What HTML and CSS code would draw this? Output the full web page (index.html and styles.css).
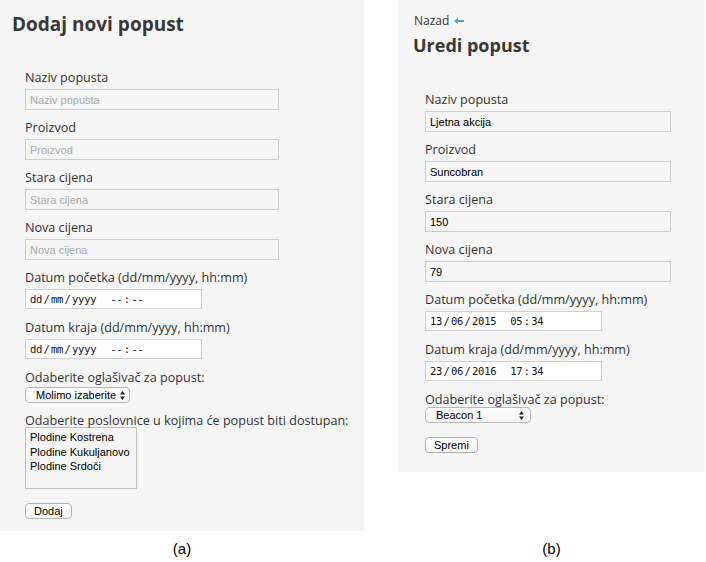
FILE: index.html
```html
<!DOCTYPE html>
<html lang="hr">
<head>
<meta charset="utf-8">
<title>Popusti</title>
<link rel="stylesheet" href="styles.css">
</head>
<body>
<div class="sheet">
  <section class="panel panel-a">
    <h1 class="title title-a">Dodaj novi popust</h1>
    <form class="form form-a">
      <div class="field">
        <label class="label">Naziv popusta</label>
        <input class="text" type="text" placeholder="Naziv popusta">
      </div>
      <div class="field">
        <label class="label">Proizvod</label>
        <input class="text" type="text" placeholder="Proizvod">
      </div>
      <div class="field">
        <label class="label">Stara cijena</label>
        <input class="text" type="text" placeholder="Stara cijena">
      </div>
      <div class="field">
        <label class="label">Nova cijena</label>
        <input class="text" type="text" placeholder="Nova cijena">
      </div>
      <div class="field field-date">
        <label class="label">Datum početka (dd/mm/yyyy, hh:mm)</label>
        <div class="datebox"><span class="seg">dd</span><span class="sep">/</span><span class="seg">mm</span><span class="sep">/</span><span class="seg">yyyy</span><span class="gap"></span><span class="seg">--</span><span class="sep">:</span><span class="seg">--</span></div>
      </div>
      <div class="field field-date">
        <label class="label">Datum kraja (dd/mm/yyyy, hh:mm)</label>
        <div class="datebox"><span class="seg">dd</span><span class="sep">/</span><span class="seg">mm</span><span class="sep">/</span><span class="seg">yyyy</span><span class="gap"></span><span class="seg">--</span><span class="sep">:</span><span class="seg">--</span></div>
      </div>
      <div class="field">
        <label class="label">Odaberite oglašivač za popust:</label>
        <div class="select select-a"><span>Molimo izaberite</span><svg class="updown" width="5" height="9" viewBox="0 0 5 9"><polygon points="0,3.6 2.5,0 5,3.6"/><polygon points="0,5.4 2.5,9 5,5.4"/></svg></div>
      </div>
      <div class="field">
        <label class="label">Odaberite poslovnice u kojima će popust biti dostupan:</label>
        <div class="listbox">
          <div class="option">Plodine Kostrena</div>
          <div class="option">Plodine Kukuljanovo</div>
          <div class="option">Plodine Srdoči</div>
        </div>
      </div>
      <div class="field field-btn">
        <button class="btn" type="button">Dodaj</button>
      </div>
    </form>
  </section>

  <section class="panel panel-b">
    <div class="back">Nazad <svg class="arrow" width="10" height="6" viewBox="0 0 10 6"><polygon points="0,3 4,0 4,2 10,2 10,4 4,4 4,6"/></svg></div>
    <h1 class="title title-b">Uredi popust</h1>
    <form class="form form-b">
      <div class="field">
        <label class="label">Naziv popusta</label>
        <input class="text" type="text" value="Ljetna akcija">
      </div>
      <div class="field">
        <label class="label">Proizvod</label>
        <input class="text" type="text" value="Suncobran">
      </div>
      <div class="field">
        <label class="label">Stara cijena</label>
        <input class="text" type="text" value="150">
      </div>
      <div class="field">
        <label class="label">Nova cijena</label>
        <input class="text" type="text" value="79">
      </div>
      <div class="field field-date">
        <label class="label">Datum početka (dd/mm/yyyy, hh:mm)</label>
        <div class="datebox"><span class="seg">13</span><span class="sep">/</span><span class="seg">06</span><span class="sep">/</span><span class="seg">2015</span><span class="gap"></span><span class="seg">05</span><span class="sep">:</span><span class="seg">34</span></div>
      </div>
      <div class="field field-date">
        <label class="label">Datum kraja (dd/mm/yyyy, hh:mm)</label>
        <div class="datebox"><span class="seg">23</span><span class="sep">/</span><span class="seg">06</span><span class="sep">/</span><span class="seg">2016</span><span class="gap"></span><span class="seg">17</span><span class="sep">:</span><span class="seg">34</span></div>
      </div>
      <div class="field">
        <label class="label">Odaberite oglašivač za popust:</label>
        <div class="select select-b"><span>Beacon 1</span><svg class="updown" width="5" height="9" viewBox="0 0 5 9"><polygon points="0,3.6 2.5,0 5,3.6"/><polygon points="0,5.4 2.5,9 5,5.4"/></svg></div>
      </div>
      <div class="field field-btn">
        <button class="btn" type="button">Spremi</button>
      </div>
    </form>
  </section>

  <div class="caption">(a)</div>
  <div class="caption">(b)</div>
</div>
</body>
</html>
```

FILE: styles.css
```css
html, body {
  margin: 0;
  padding: 0;
  background: #ffffff;
}

body {
  font-family: "Open Sans", "DejaVu Sans", sans-serif;
  color: #333333;
}

.sheet {
  display: grid;
  grid-template-columns: 364px 307px;
  column-gap: 34px;
  row-gap: 9px;
  align-items: start;
  width: 706px;
}

.panel {
  background: #f5f5f5;
  box-sizing: border-box;
}

.panel-a {
  height: 531px;
  padding: 12px 0 0 12px;
}

.panel-b {
  height: 472px;
  padding: 14px 0 0 15px;
}

.title {
  margin: 0;
  font-size: 18px;
  line-height: 24px;
  font-weight: 700;
  color: #383838;
}

.title-a {
  font-size: 19px;
}

.title-b {
  margin-top: 5px;
}

.back {
  display: flex;
  align-items: center;
  gap: 5px;
  padding-left: 1px;
  font-size: 12px;
  line-height: 14px;
  color: #333333;
}

.arrow {
  fill: #4d9de0;
  display: block;
}

.form {
  margin: 0;
}

.form-a {
  margin: 35px 0 0 13px;
}

.form-b {
  margin: 36px 0 0 12px;
}

.field + .field {
  margin-top: 11px;
}

.field-date + .field {
  margin-top: 12px;
}

.field + .field-btn {
  margin-top: 14px;
}

.label {
  display: block;
  font-size: 12.6px;
  line-height: 14px;
  color: #333333;
}

.text {
  display: block;
  box-sizing: border-box;
  width: 254px;
  height: 21px;
  margin: 4px 0 0;
  padding: 0 4px;
  border: 1px solid #cccccc;
  border-radius: 0;
  background: #f5f5f5;
  font: 11px "Liberation Sans", Arial, sans-serif;
  color: #000000;
  outline: none;
}

.text::placeholder {
  color: #a9a9a9;
}

.form-b .text {
  width: 246px;
}

.datebox {
  box-sizing: border-box;
  width: 177px;
  height: 20px;
  margin-top: 4px;
  padding: 0 4px;
  border: 1px solid #cfcfcf;
  background: #ffffff;
  font: 10.5px/18px "DejaVu Sans Mono", "Liberation Mono", monospace;
  letter-spacing: -0.3px;
  color: #111111;
  white-space: nowrap;
  opacity: 0.999;
}

.datebox .sep {
  display: inline-block;
  width: 9px;
  text-align: center;
}

.datebox .gap {
  display: inline-block;
  width: 14px;
}

.select {
  box-sizing: border-box;
  display: flex;
  align-items: center;
  justify-content: space-between;
  height: 16px;
  padding: 0 4px 0 10px;
  border: 1px solid #b8b8b8;
  border-radius: 4px;
  background: linear-gradient(#ffffff, #f3f3f3);
  font: 11px/14px "Liberation Sans", Arial, sans-serif;
  color: #000000;
}

.select-a {
  width: 105px;
  margin-top: 2px;
}

.select-b {
  width: 106px;
  padding-right: 6px;
}

.updown {
  display: block;
  fill: #222222;
}

.listbox {
  box-sizing: border-box;
  width: 112px;
  height: 62px;
  margin-top: -1px;
  padding: 2px 4px;
  border: 1px solid #bdbdbd;
  background: #f5f5f5;
  font: 11px/14.5px "Liberation Sans", Arial, sans-serif;
  color: #000000;
}

.btn {
  display: block;
  box-sizing: border-box;
  height: 16px;
  margin: 0;
  padding: 0 8px;
  border: 1px solid #b3b3b3;
  border-radius: 4px;
  background: linear-gradient(#ffffff, #f6f6f6);
  font: 11px/14px "Liberation Sans", Arial, sans-serif;
  color: #000000;
}

.caption {
  text-align: center;
  font: 15px/18px "Liberation Sans", Arial, sans-serif;
  color: #000000;
}
```
